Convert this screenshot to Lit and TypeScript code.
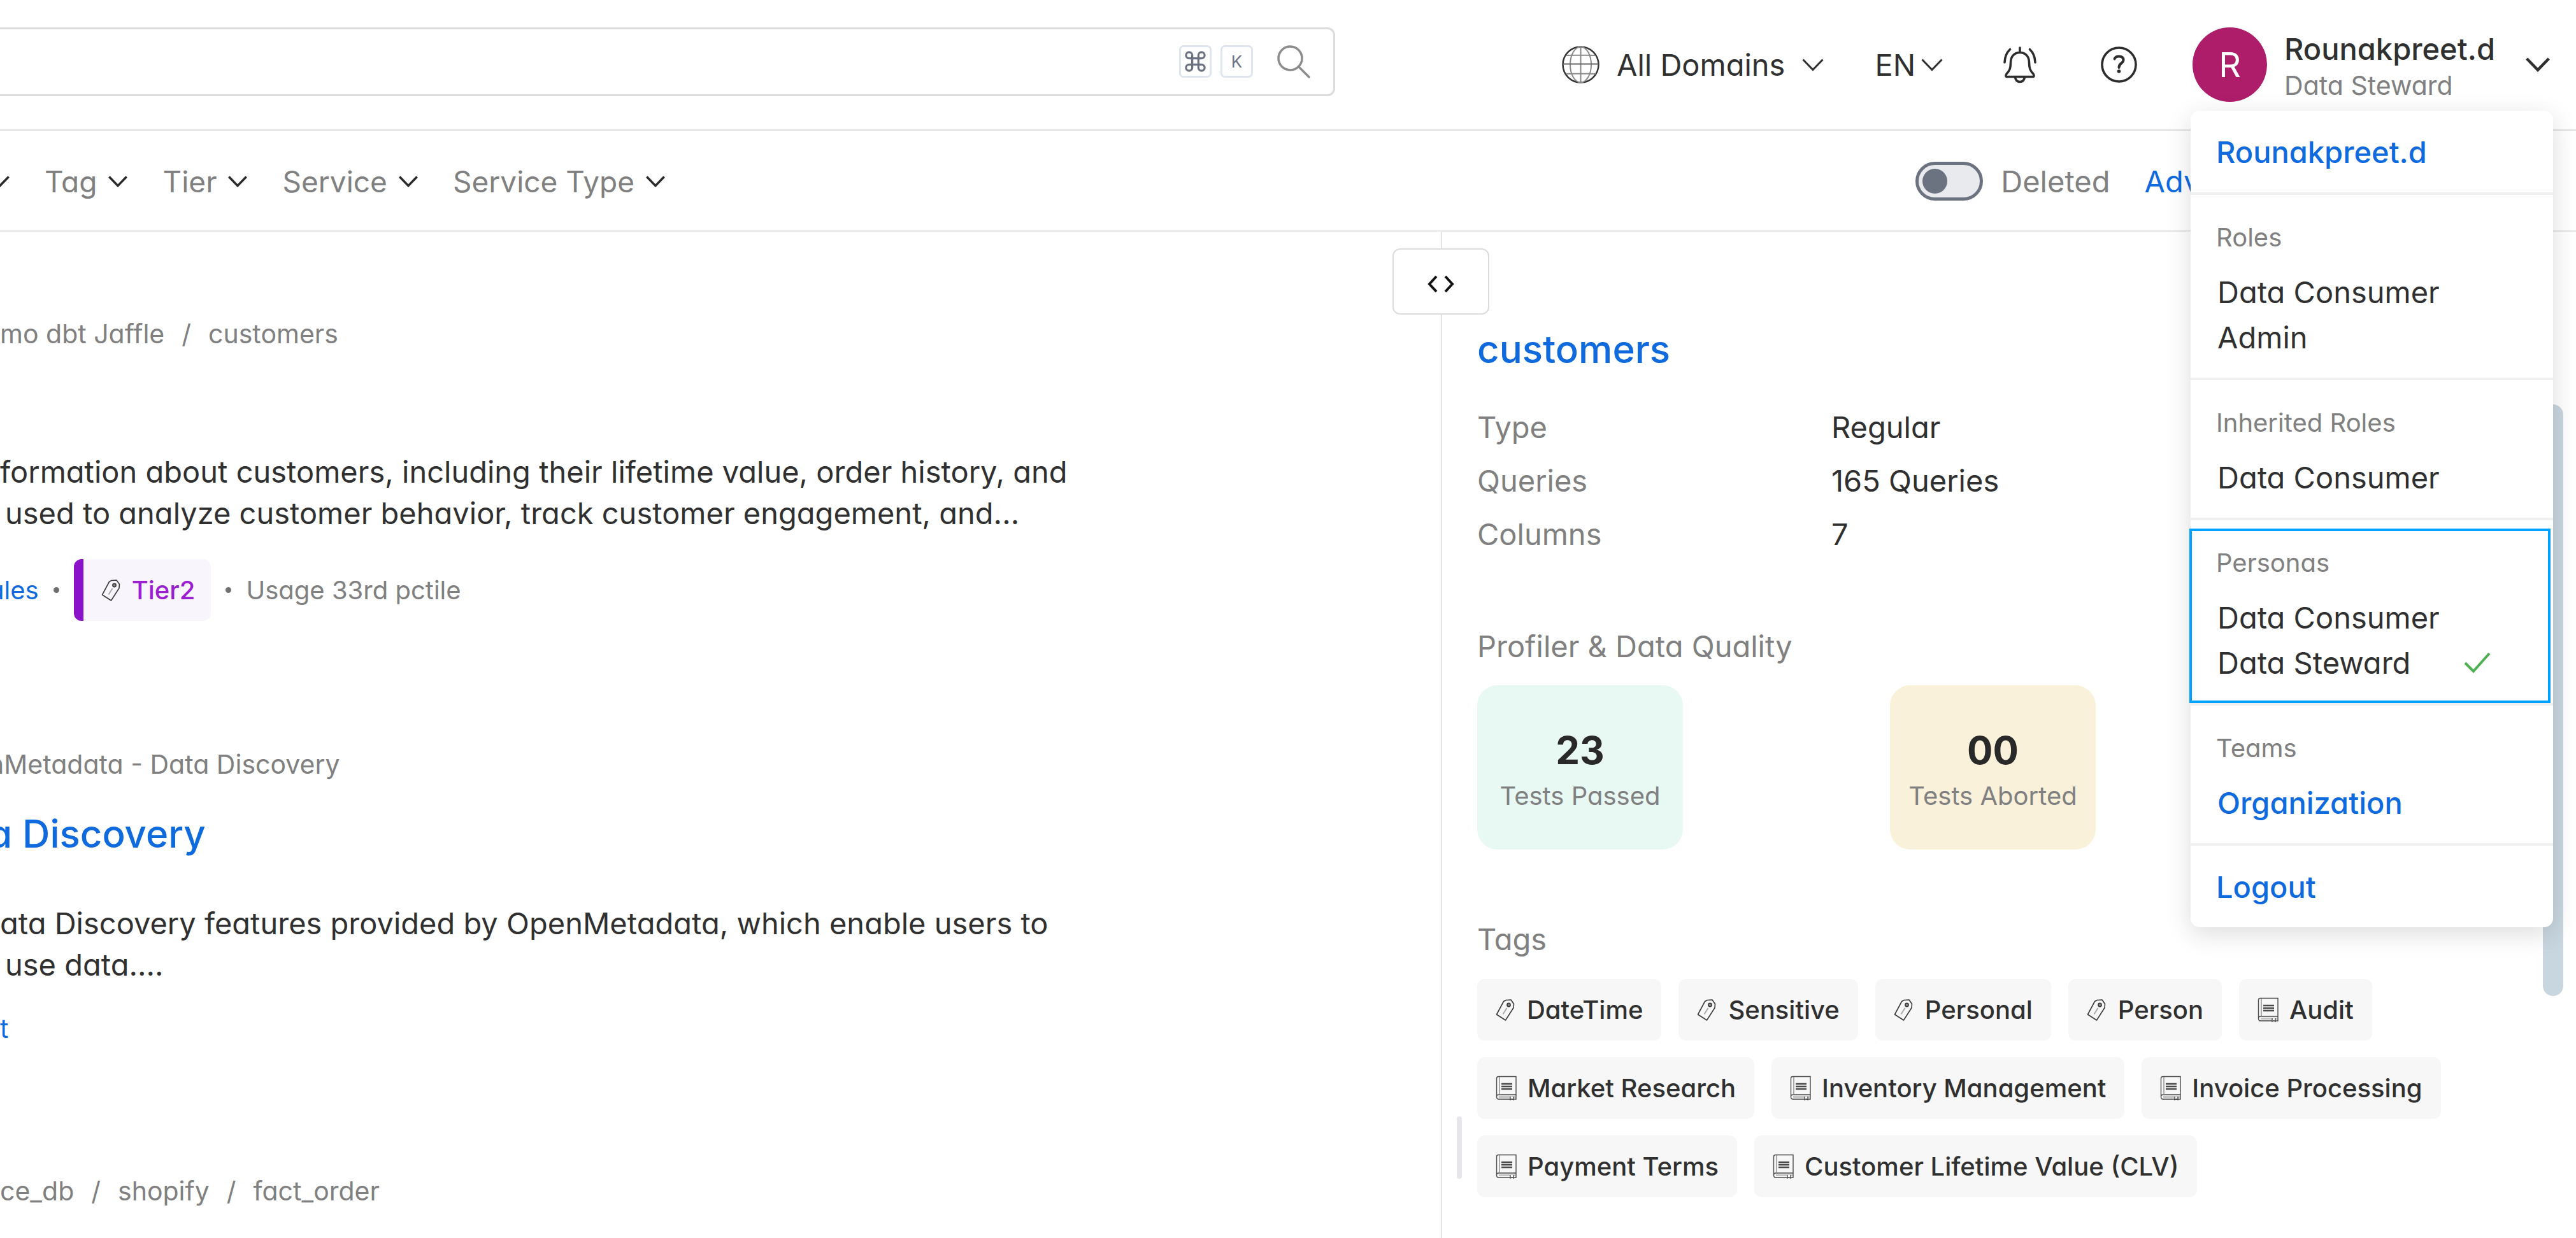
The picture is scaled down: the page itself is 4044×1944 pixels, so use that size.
import { LitElement, html, css, nothing } from "lit";
import { customElement } from "lit/decorators.js";

const chevron = (cls: string) => html`<svg class="chev ${cls}" viewBox="0 0 34 20" fill="none" stroke="currentColor" aria-hidden="true"><path d="M1.5 1.5 17 17.5 32.5 1.5" /></svg>`;

const tagIcon = html`<svg class="tag-icon" viewBox="0 0 32 34" fill="none" stroke="#3a3a3a" stroke-width="1.6" stroke-linejoin="round" aria-hidden="true">
  <path d="M12.500 3.500 16 1.500 24 1 28.500 7.500 28 13.500 15.500 33 1.500 24Z" />
  <circle cx="20.500" cy="9" r="2.600" fill="#8a8a8a" /><path d="M17.500 14 11.500 23.500" stroke="#aaa" stroke-width="2" />
</svg>`;

const bookIcon = html`<svg class="book-icon" viewBox="0 0 33 40" fill="none" stroke="#4a4a4a" stroke-width="1.400" aria-hidden="true">
  <path d="M1.500 34V4.500Q1.500 1.500 4.500 1.500H32V37H4.500Q1.500 37 1.500 33Q1.500 30 4.500 30H32" /><path d="M6 2V30" stroke="#8a8a8a" />
  <path d="M5 33.500H31" stroke="#c4c4c4" stroke-width="3" />
  <path d="M9 13H26M9 17H26M9 21H26" stroke-width="2.400" /><path d="M23 33V38L25.500 36.500 28 38V33" fill="#fff" />
</svg>`;

interface Tag { label: string; glossary?: boolean }

const TAGS: Tag[] = [
  { label: "DateTime" }, { label: "Sensitive" }, { label: "Personal" }, { label: "Person" },
  { label: "Audit", glossary: true }, { label: "Market Research", glossary: true },
  { label: "Inventory Management", glossary: true }, { label: "Invoice Processing", glossary: true },
  { label: "Payment Terms", glossary: true }, { label: "Customer Lifetime Value (CLV)", glossary: true },
];

const FACTS = [["Type", "Regular"], ["Queries", "165 Queries"], ["Columns", "7"]];

const base = css`
  * { box-sizing: border-box; margin: 0; }
  button, input { font: inherit; color: inherit; background: none; border: 0; padding: 0; }
  a { color: #0f6ade; text-decoration: none; }
  svg { display: block; flex: none; }
  ul { list-style: none; padding: 0; }
  .chev { width: 34px; height: 20px; stroke-width: 3; }
  .chev.small { width: 30px; height: 18px; stroke-width: 4; color: #292929; }
  .chev.large { width: 38px; height: 23px; stroke-width: 4; }
`;

@customElement("user-menu")
class UserMenu extends LitElement {
  static styles = [base, css`
    :host { display: block; background: #fff; border-radius: 14px; box-shadow: 0 10px 40px rgba(0, 0, 0, 0.14); color: #303030; }
    .section { position: relative; padding: 37px 40px 28px; border-bottom: 4px solid #f0f0f0; }
    .solo { padding: 31px 40px 29px; font-weight: 500; line-height: 68px; }
    .solo.last { border-bottom: 0; }
    .heading { font-size: 40px; line-height: 60px; font-weight: 400; color: #808080; margin-bottom: 20px; }
    .items { padding-left: 2px; line-height: 71px; }
    .items li { display: flex; align-items: center; justify-content: space-between; padding-right: 58px; }
    .items a { font-weight: 500; }
    .check { width: 42px; height: 34px; }
    .chosen::after { content: ""; position: absolute; inset: 13px 4px 0 -2px; border: 4px solid #00a2ff; pointer-events: none; }
  `];

  private section(title: string, items: unknown[], extra = "") {
    return html`<section class="section ${extra}"><h3 class="heading">${title}</h3>
      <ul class="items">${items.map((i) => html`<li>${i}</li>`)}</ul></section>`;
  }

  render() {
    return html`
      <div class="section solo"><a href="#profile">Rounakpreet.d</a></div>
      ${this.section("Roles", ["Data Consumer", "Admin"])}
      ${this.section("Inherited Roles", ["Data Consumer"])}
      ${this.section("Personas", [
        html`<button>Data Consumer</button>`,
        html`<button>Data Steward</button><svg class="check" viewBox="0 0 42 34" fill="none" stroke="#4caf50" stroke-width="4" aria-label="Selected"><path d="M2 17 15 30 40 2" /></svg>`,
      ], "chosen")}
      ${this.section("Teams", [html`<a href="#organization">Organization</a>`])}
      <div class="section solo last"><a href="#logout">Logout</a></div>`;
  }
}

@customElement("asset-summary")
class AssetSummary extends LitElement {
  static styles = [base, css`
    :host { display: block; position: relative; padding: 144px 120px 60px 55px; border-left: 2px solid #e4e4e4; }
    .name { font-size: 60px; line-height: 80px; font-weight: 500; }
    .facts { display: grid; grid-template-columns: 556px 1fr; line-height: 84px; margin-top: 41px; }
    .facts dt, .title { color: #808080; font-weight: 400; }
    .facts dd { color: #303030; }
    .title { line-height: 70px; font-size: 47px; }
    .cards { display: grid; grid-template-columns: 323px 323px; gap: 325px; margin: 26px 0 106px; }
    .profiler { margin-top: 99px; }
    .card { display: flex; flex-direction: column; align-items: center; justify-content: center; height: 258px; padding-top: 14px; border-radius: 32px; }
    .passed { background: #e8f8f3; }
    .aborted { background: #faf1db; }
    .count { font-size: 60px; line-height: 76px; font-weight: 700; color: #292929; }
    .caption { font-size: 40px; line-height: 68px; color: #808080; }
    .tags { display: flex; flex-wrap: wrap; gap: 26px 27px; margin-top: 27px; }
    .tags li { display: flex; align-items: center; gap: 17px; height: 97px; padding: 0 29px; border-radius: 12px; background: #f7f7f7; font-size: 40px; font-weight: 500; color: #303030; white-space: nowrap; }
    .tag-icon { width: 32px; height: 34px; }
    .book-icon { width: 33px; height: 40px; }
    .toggle { position: absolute; left: -78px; top: 26px; width: 152px; height: 104px; display: flex; align-items: center; justify-content: center; padding-top: 8px; background: #fff; border: 2px solid #dcdcdc; border-radius: 12px; }
    .toggle svg { width: 44px; height: 28px; }
    .grip { position: absolute; left: 23px; top: 1389px; width: 8px; height: 98px; border-radius: 4px; background: #e6e6ec; }
    .thumb { position: absolute; right: 20px; top: 271px; width: 32px; height: 929px; border-radius: 16px; background: #c8d6df; }
  `];

  render() {
    return html`
      <button class="toggle" aria-label="Resize panel"><svg viewBox="0 0 44 28" fill="none" stroke="#111" stroke-width="4"><path d="M15 2 4 14 15 26M29 2 40 14 29 26" /></svg></button>
      <div class="grip"></div><div class="thumb"></div>
      <h2 class="name"><a href="#customers">customers</a></h2>
      <dl class="facts">${FACTS.map(([k, v]) => html`<dt>${k}</dt><dd>${v}</dd>`)}</dl>
      <h3 class="title profiler">Profiler &amp; Data Quality</h3>
      <div class="cards">
        <div class="card passed"><span class="count">23</span><span class="caption">Tests Passed</span></div>
        <div class="card aborted"><span class="count">00</span><span class="caption">Tests Aborted</span></div>
      </div>
      <h3 class="title">Tags</h3>
      <ul class="tags">${TAGS.map((t) => html`<li>${t.glossary ? bookIcon : tagIcon}${t.label}</li>`)}</ul>`;
  }
}

@customElement("app-root")
class AppRoot extends LitElement {
  static styles = [base, css`
    :host { display: flex; flex-direction: column; position: relative; min-height: 100vh; overflow: hidden; background: #fff; color: #303030; font-family: Inter, "Open Sans", sans-serif; font-feature-settings: "cv11"; font-size: 47px; line-height: 70px; }
    .header { display: flex; align-items: center; justify-content: space-between; height: 206px; padding-right: 41px; border-bottom: 3px solid #e6e6e6; }
    .search { display: flex; align-items: center; gap: 14px; width: 53%; max-width: 2096px; height: 108px; margin-bottom: 10px; padding-right: 36px; border: 3px solid #dcdcdc; border-left: 0; border-radius: 0 12px 12px 0; }
    .search input { flex: 1; min-width: 0; height: 100%; outline: 0; }
    kbd { display: flex; align-items: center; justify-content: center; width: 51px; height: 51px; border: 3px solid #dfe5ee; border-radius: 7px; font-family: inherit; font-size: 26px; line-height: 30px; color: #6b7280; }
    kbd svg { width: 39px; height: 39px; }
    .search button { margin-left: 24px; }
    .magnifier { width: 52px; height: 52px; }
    .actions { display: flex; align-items: center; }
    .pick { display: flex; align-items: center; }
    .domains { gap: 27px; margin-right: 80px; }
    .language { gap: 9px; margin-right: 95px; }
    .globe { width: 59px; height: 59px; }
    .bell { width: 52px; height: 58px; }
    .help { width: 57px; height: 57px; }
    .alerts { margin-right: 101px; }
    .support { margin-right: 87px; }
    .user { display: flex; align-items: center; text-align: left; }
    .avatar { display: flex; align-items: center; justify-content: center; width: 117px; height: 117px; margin-right: 27px; border-radius: 50%; background: #ad1d6a; color: #fff; font-size: 54px; }
    .who { display: flex; flex-direction: column; padding-top: 4px; margin-right: 48px; }
    .who-name { font-weight: 500; line-height: 60px; }
    .who-role { font-size: 41px; line-height: 54px; color: #808080; }
    .menu { position: absolute; z-index: 2; top: 174px; right: 36px; width: 569px; }
    .filters { display: flex; align-items: center; justify-content: space-between; height: 158px; border-bottom: 3px solid #ececec; color: #808080; }
    .filter-list { display: flex; gap: 55px; padding-top: 2px; margin-left: -15px; font-size: 46px; }
    .filter-list button { display: flex; align-items: center; gap: 18px; }
    .filter-side { display: flex; align-items: center; padding-top: 2px; padding-right: 451px; }
    .deleted { display: flex; align-items: center; gap: 28px; margin-right: 54px; }
    .switch { appearance: none; display: flex; align-items: center; width: 106px; height: 61px; padding: 0 6px; border: 5px solid #6b7280; border-radius: 31px; background: #e8eaed; }
    .switch::before { content: ""; width: 39px; height: 39px; border-radius: 50%; background: #6b7280; }
    .advanced { color: #0f6ade; }
    .body { display: grid; grid-template-columns: 2262fr 1782fr; flex: 1; }
    .results { min-width: 0; white-space: nowrap; padding-top: 128px; }
    .crumbs { display: flex; gap: 27px; font-size: 41px; line-height: 64px; color: #808080; }
    .desc { line-height: 65px; }
    .desc-1 { margin-top: 152px; }
    .indent { padding-left: 8px; }
    .meta { display: flex; align-items: center; font-size: 40px; height: 97px; margin-top: 40px; color: #808080; }
    .dot { width: 9px; height: 9px; border-radius: 50%; background: #707070; }
    .tier { display: flex; align-items: center; gap: 16px; height: 97px; margin: 0 23px; padding: 0 25px 0 28px; border-left: 15px solid #8b12c9; border-radius: 12px; background: #f9f5fd; color: #9b1fd0; font-weight: 500; }
    .tag-icon { width: 32px; height: 34px; }
    .meta a { margin-right: 23px; }
    .usage { margin-left: 23px; }
    .crumbs-2 { margin-top: 193px; }
    .cut { margin-left: -18px; }
    .title { font-size: 60px; line-height: 80px; font-weight: 500; margin-top: 37px; }
    .desc-2 { margin-top: 68px; }
    .owner { font-size: 41px; line-height: 64px; margin-top: 36px; }
    .crumbs-3 { margin-top: 191px; }
  `];

  private header() {
    return html`<header class="header">
      <form class="search" role="search">
        <input type="search" aria-label="Search" />
        <kbd><svg viewBox="0 0 24 24" fill="none" stroke="#6b7280" stroke-width="2" aria-label="Command"><path d="M15 6v12a3 3 0 1 0 3-3H6a3 3 0 1 0 3 3V6a3 3 0 1 0-3 3h12a3 3 0 1 0-3-3" /></svg></kbd><kbd>K</kbd>
        <button aria-label="Search"><svg class="magnifier" viewBox="0 0 52 52" fill="none" stroke="#8c8c8c" stroke-width="3.500" stroke-linecap="round"><circle cx="20.500" cy="20.500" r="18.500" /><path d="M34 34 50 50" /></svg></button>
      </form>
      <div class="actions">
        <button class="pick domains">
          <svg class="globe" viewBox="0 0 59 59" fill="none" stroke="#333" aria-hidden="true"><circle cx="29.500" cy="29.500" r="28" stroke-width="2.500" /><g stroke="#8a8a8a" stroke-width="2"><ellipse cx="29.500" cy="29.500" rx="16.500" ry="28" /><path d="M29.500 1V58M7 15Q29.500 14 52 15M6 44Q29.500 43 53 44" /></g><path d="M1.500 28.500H57.500" stroke="#666" stroke-width="2" /></svg>
          All Domains${chevron("")}
        </button>
        <button class="pick language">EN${chevron("")}</button>
        <button class="alerts" aria-label="Notifications"><svg class="bell" viewBox="0 0 52 58" fill="none" stroke="#2d2d2d" stroke-width="3.600" stroke-linecap="round" stroke-linejoin="round"><path d="M26 2V9M26 9.500C17 9.500 11.500 16 11.500 25C11.500 34 10 38 5 43Q2.500 47.500 6 47.500H46Q49.500 47.500 47 43C42 38 40.500 34 40.500 25C40.500 16 35 9.500 26 9.500ZM18.500 48Q19.500 55.500 26 55.500Q32.500 55.500 33.500 48" /><path d="M2 25Q2.500 12 10.500 4.500M50 25Q49.500 12 41.500 4.500" /></svg></button>
        <button class="support" aria-label="Help"><svg class="help" viewBox="0 0 57 57" fill="none" stroke="#2d2d2d" stroke-width="3.600" stroke-linecap="round"><circle cx="28.500" cy="28.500" r="26.500" /><path d="M21.500 19.500Q23 15.500 28.500 15.500Q35.500 15.500 35.500 21Q35.500 24 32 26.500Q28.500 29 28.500 33" stroke-width="4" /><circle cx="28.500" cy="39" r="2.800" fill="#2d2d2d" stroke="none" /></svg></button>
        <button class="user" aria-haspopup="menu" aria-expanded="true">
          <span class="avatar">R</span>
          <span class="who"><span class="who-name">Rounakpreet.d</span><span class="who-role">Data Steward</span></span>
          ${chevron("large")}
        </button>
      </div>
    </header>`;
  }

  private filters() {
    return html`<nav class="filters">
      <div class="filter-list">${["", "Tag", "Tier", "Service", "Service Type"].map(
        (f) => html`<button aria-label=${f || "Owner"}>${f || nothing}${chevron("small")}</button>`)}</div>
      <div class="filter-side">
        <label class="deleted"><input class="switch" type="checkbox" role="switch" />Deleted</label>
        <button class="advanced">Advanced</button>
      </div>
    </nav>`;
  }

  render() {
    return html`${this.header()}${this.filters()}
      <main class="body">
        <div class="results">
          <div class="crumbs"><span>mo dbt Jaffle</span><span>/</span><span>customers</span></div>
          <p class="desc desc-1">formation about customers, including their lifetime value, order history, and<br /><span class="indent">used to analyze customer behavior, track customer engagement, and...</span></p>
          <div class="meta cut"><a href="#sales">ales</a><span class="dot"></span><span class="tier">${tagIcon}Tier2</span><span class="dot"></span><span class="usage">Usage 33rd pctile</span></div>
          <div class="crumbs crumbs-2 cut"><span>nMetadata - Data Discovery</span></div>
          <h2 class="title cut"><a href="#discovery">a Discovery</a></h2>
          <p class="desc desc-2">ata Discovery features provided by OpenMetadata, which enable users to<br /><span class="indent">use data....</span></p>
          <div class="owner"><a href="#owner">t</a></div>
          <div class="crumbs crumbs-3"><span>ce_db</span><span>/</span><span>shopify</span><span>/</span><span>fact_order</span></div>
        </div>
        <asset-summary></asset-summary>
      </main>
      <user-menu class="menu"></user-menu>`;
  }
}
